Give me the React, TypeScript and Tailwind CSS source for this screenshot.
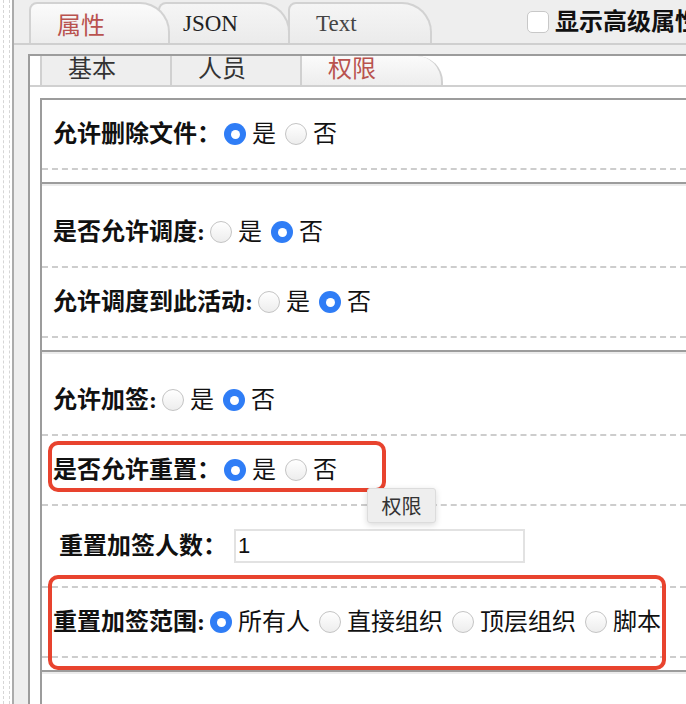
import React from 'react';

const SERIF = "font-['Liberation_Serif','Noto_Sans_CJK_SC',serif]";

const Radio = ({ checked }: { checked?: boolean }) =>
  checked ? (
    <span className="w-[22px] h-[22px] rounded-full bg-[#2f7df6] flex items-center justify-center shrink-0">
      <span className="w-[9px] h-[9px] rounded-full bg-white" />
    </span>
  ) : (
    <span className="w-[22px] h-[22px] rounded-full border border-[#c4c4c4] bg-gradient-to-b from-white to-[#ededed] shrink-0" />
  );

interface RadioRowProps {
  label: string;
  options: string[];
  selected: number;
  labelGap?: string;
}

const RadioRow = ({ label, options, selected, labelGap = 'ml-[5px]' }: RadioRowProps) => (
  <div className="h-[70px] border-b-2 border-dashed border-[#cdcdcd] flex items-center pl-[11px]">
    <span className="font-bold whitespace-nowrap">{label}</span>
    {options.map((opt, i) => (
      <span
        key={opt}
        className={`flex items-center ${i === 0 ? labelGap : 'ml-[9px]'}`}
      >
        <Radio checked={i === selected} />
        <span className="ml-[6px] whitespace-nowrap">{opt}</span>
      </span>
    ))}
  </div>
);

const Tab = ({
  text,
  active,
  className,
  textClass,
}: {
  text: string;
  active?: boolean;
  className: string;
  textClass: string;
}) => (
  <div
    className={`h-[41px] shrink-0 border-2 border-b-0 border-[#d2d2d2] rounded-tl-[8px] rounded-tr-[30px] flex items-center ${
      active
        ? 'bg-gradient-to-b from-[#fbfbfb] to-[#ededed] z-20'
        : 'bg-gradient-to-b from-[#f5f5f5] to-[#ebebeb]'
    } ${className}`}
  >
    <span className={textClass}>{text}</span>
  </div>
);

export default function App() {
  return (
    <div
      className={`w-[686px] h-[704px] overflow-hidden flex bg-white relative text-[24px] leading-[24px] text-[#111] ${SERIF}`}
    >
      {/* left gutter */}
      <div className="w-[12px] shrink-0 flex justify-around">
        <div className="border-l border-dashed border-[#d6d6d6]" />
        <div className="border-l border-dashed border-[#d6d6d6]" />
      </div>
      <div className="w-[2px] shrink-0 bg-[#ababab]" />

      <div className="flex-1 min-w-0 bg-[#eeeeee] flex flex-col">
        {/* top tabs */}
        <div className="h-[45px] shrink-0 border-b-2 border-[#cfcfcf] flex items-end pl-[15px]">
          <Tab
            text="属性"
            active
            className="w-[141px] pl-[26px] relative"
            textClass="font-['Noto_Sans_CJK_SC',sans-serif] text-[#b9534f] text-[24px]"
          />
          <Tab
            text="JSON"
            className="w-[132px] -ml-[12px] pl-[23px] relative z-10"
            textClass="text-[#222] text-[23px]"
          />
          <Tab
            text="Text"
            className="w-[144px] -ml-[2px] pl-[26px]"
            textClass="text-[#444] text-[23px]"
          />
          <div className="self-center flex items-center ml-[95px] shrink-0">
            <span className="w-[22px] h-[22px] rounded-[5px] border border-[#c8c8c8] bg-white" />
            <span className="ml-[6px] whitespace-nowrap font-bold">显示高级属性</span>
          </div>
        </div>
        <div className="h-[9px] shrink-0" />

        {/* panel */}
        <div className="ml-[14px] flex-1 bg-white border-l-2 border-t-2 border-[#9c9c9c] flex flex-col min-h-0">
          <div className="h-[31px] shrink-0 border-b-2 border-[#d0d0d0] flex pl-[10px] overflow-hidden">
            <div className="w-[130px] border-l-2 border-[#d0d0d0] bg-[#eeeeee] pl-[26px]">
              <span className="block -mt-[1px] text-[#333] font-['Noto_Sans_CJK_SC',sans-serif]">基本</span>
            </div>
            <div className="w-[130px] border-l-2 border-[#d0d0d0] bg-[#eeeeee] pl-[26px]">
              <span className="block -mt-[1px] text-[#333] font-['Noto_Sans_CJK_SC',sans-serif]">人员</span>
            </div>
            <div className="w-[143px] border-l-2 border-r-2 border-[#d0d0d0] rounded-tr-[26px] bg-gradient-to-b from-[#fbfbfb] to-[#ededed] pl-[26px]">
              <span className="block -mt-[1px] text-[#b9534f] font-['Noto_Sans_CJK_SC',sans-serif]">权限</span>
            </div>
          </div>
          <div className="h-[11px] shrink-0" />

          <div className="ml-[10px] flex-1 flex flex-col">
            {/* section 1 */}
            <div className="border-t-2 border-l-2 border-[#9c9c9c] pb-[12px]">
              <RadioRow label="允许删除文件：" options={['是', '否']} selected={0} labelGap="ml-[3px]" />
            </div>

            {/* section 2 */}
            <div className="border-t-2 border-l-2 border-[#9c9c9c] pb-[12px] pt-[14px] shadow-[inset_0_2px_0_#ececec]">
              <RadioRow label="是否允许调度:" options={['是', '否']} selected={1} />
              <RadioRow label="允许调度到此活动:" options={['是', '否']} selected={1} />
            </div>

            {/* section 3 */}
            <div className="border-t-2 border-l-2 border-[#9c9c9c] pb-[12px] pt-[14px] shadow-[inset_0_2px_0_#ececec]">
              <RadioRow label="允许加签:" options={['是', '否']} selected={1} />
              <RadioRow label="是否允许重置：" options={['是', '否']} selected={0} labelGap="ml-[3px]" />
              <div className="h-[82px] border-b-2 border-dashed border-[#cdcdcd] flex items-center pl-[17px]">
                <span className="font-bold whitespace-nowrap">重置加签人数：</span>
                <div className="ml-[7px] w-[291px] h-[34px] shrink-0 border-2 border-[#e2e2e2] flex items-center pl-[2px] font-['Liberation_Sans',sans-serif] text-[22px]">
                  1
                </div>
              </div>
              <RadioRow
                label="重置加签范围:"
                options={['所有人', '直接组织', '顶层组织', '脚本']}
                selected={0}
              />
            </div>

            {/* section 4 */}
            <div className="flex-1 border-t-2 border-l-2 border-[#9c9c9c] shadow-[inset_0_2px_0_#ececec]" />
          </div>
        </div>
      </div>

      {/* annotations */}
      <div className="absolute left-[48px] top-[441px] w-[338px] h-[51px] border-4 border-[#e8432e] rounded-[10px]" />
      <div className="absolute left-[48px] top-[575px] w-[618px] h-[95px] border-4 border-[#e8432e] rounded-[10px]" />

      {/* tooltip */}
      <div className="absolute left-[367px] top-[488px] w-[69px] h-[35px] bg-[#eeeeee] border border-[#dcdcdc] rounded-[3px] shadow-[0_2px_6px_rgba(0,0,0,0.15)] flex items-center justify-center text-[20px] text-[#333] font-['Noto_Sans_CJK_SC',sans-serif]">
        权限
      </div>
    </div>
  );
}
